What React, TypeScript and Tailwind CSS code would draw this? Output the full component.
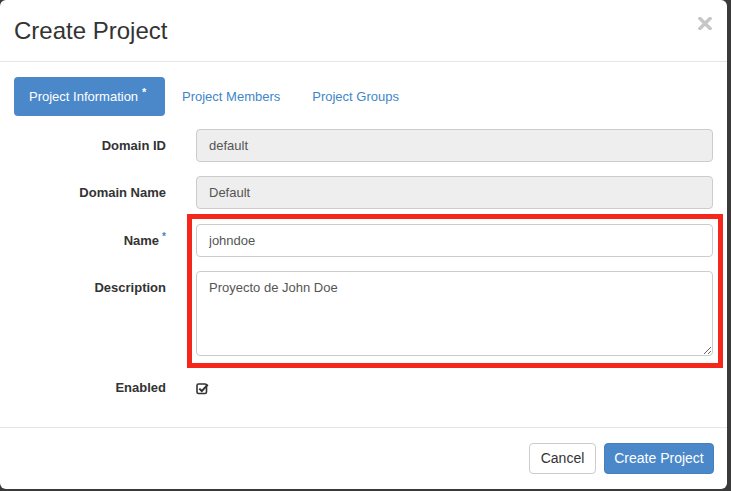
export default function App() {
  return (
    <div className="relative h-[491px] w-[731px] overflow-hidden bg-[#3a3a3a] font-['Liberation_Sans',Arial,sans-serif] text-[#333]">
      <div className="flex h-[489px] w-[727px] flex-col rounded-[6px] bg-white">
        {/* Header */}
        <div className="flex h-[62px] items-center justify-between border-b border-[#e5e5e5] pl-[14px] pr-[15px]">
          <h4 className="text-[24px] leading-none text-[#333]">Create Project</h4>
          <svg width="14" height="13" viewBox="0 0 14 13" className="-mt-[14px]">
            <path d="M2 1.5 L12 11.5 M12 1.5 L2 11.5" stroke="#c6c6c6" strokeWidth="3.4" strokeLinecap="square" />
          </svg>
        </div>

        {/* Body */}
        <div className="flex-1 pl-[14px] pr-[14px] pt-[15px]">
          <div className="flex h-[39px] items-center text-[13px]">
            <div className="flex h-[39px] w-[151px] items-center rounded-[4px] bg-[#4a88ca] pl-[15px] text-white">
              Project Information
              <span className="ml-[4px] -mt-[9px] text-[11px] font-bold leading-none">*</span>
            </div>
            <div className="ml-[2px] px-[15px] text-[#3f86c8]">Project Members</div>
            <div className="ml-[2px] px-[15px] text-[#3f86c8]">Project Groups</div>
          </div>

          <div className="mt-[13px] flex flex-col text-[13px]">
            <Row label="Domain ID">
              <input
                readOnly
                value="default"
                className="h-[33px] w-full rounded-[4px] border border-[#cccccc] bg-[#eeeeee] px-[12px] text-[#555] outline-none"
              />
            </Row>
            <Row label="Domain Name" className="mt-[14px]">
              <input
                readOnly
                value="Default"
                className="h-[33px] w-full rounded-[4px] border border-[#cccccc] bg-[#eeeeee] px-[12px] text-[#555] outline-none"
              />
            </Row>
            <Row label="Name" required className="mt-[15px]">
              <input
                readOnly
                value="johndoe"
                className="h-[33px] w-full rounded-[4px] border border-[#cccccc] bg-white px-[12px] text-[#555] outline-none"
              />
            </Row>
            <Row label="Description" className="mt-[14px]">
              <textarea
                readOnly
                defaultValue="Proyecto de John Doe"
                className="block h-[85px] w-full rounded-[4px] border border-[#cccccc] bg-white px-[12px] py-[6px] leading-[20px] text-[#555] outline-none"
              />
            </Row>
            <div className="mt-[22px] flex h-[20px] items-center">
              <div className="w-[152px] text-right font-bold">Enabled</div>
              <div className="ml-[30px]">
                <svg width="13" height="13" viewBox="0 0 13 13">
                  <rect x="1" y="2" width="9.5" height="9.5" rx="1.5" fill="none" stroke="#333" strokeWidth="1.6" />
                  <path d="M3.3 6.6 L5.8 9 L11.8 2.6" fill="none" stroke="#333" strokeWidth="2" />
                </svg>
              </div>
            </div>
          </div>
        </div>

        {/* Footer */}
        <div className="flex h-[62px] items-center justify-end gap-[8px] border-t border-[#e5e5e5] pr-[13px]">
          <button className="flex h-[31px] w-[67px] items-center justify-center rounded-[4px] border border-[#cccccc] bg-white text-[14px] text-[#333]">
            Cancel
          </button>
          <button className="flex h-[31px] w-[110px] items-center justify-center rounded-[4px] border border-[#4280c0] bg-[#4a88ca] text-[14px] text-white">
            Create Project
          </button>
        </div>
      </div>

      {/* red highlight annotation */}
      <div className="absolute left-[187px] top-[214px] h-[154px] w-[536px] border-[5px] border-[#f5261b]" />
    </div>
  );
}

function Row({
  label,
  required,
  className,
  children,
}: {
  label: string;
  required?: boolean;
  className?: string;
  children: React.ReactNode;
}) {
  return (
    <div className={`flex items-start ${className ?? ""}`}>
      <div className="flex h-[33px] w-[152px] items-center justify-end font-bold">
        {label}
        {required && <span className="ml-[3px] -mt-[8px] text-[10px] leading-none text-[#3f86c8]">*</span>}
      </div>
      <div className="ml-[30px] flex-1">{children}</div>
    </div>
  );
}
